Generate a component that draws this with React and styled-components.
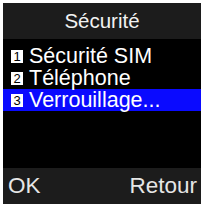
import styled, { createGlobalStyle } from "styled-components";

const GlobalStyle = createGlobalStyle`
  html, body {
    margin: 0;
    padding: 0;
    background: #ffffff;
  }
  body {
    font-family: "Liberation Sans", Arial, sans-serif;
  }
`;

const Screen = styled.div`
  width: 198px;
  height: 201px;
  margin: 3px 3px 2px 3px;
  background: #000000;
  display: flex;
  flex-direction: column;
`;

const Header = styled.div`
  height: 36px;
  background: #1c1c1c;
  color: #f2f2f2;
  font-size: 20.5px;
  display: flex;
  align-items: center;
  justify-content: center;
`;

const List = styled.ul`
  list-style: none;
  margin: 0;
  padding: 6px 0 0 0;
  flex: 1;
`;

const Item = styled.li`
  height: 22px;
  display: flex;
  align-items: center;
  gap: 6px;
  padding-left: 8px;
  font-size: 21.5px;
  line-height: 22px;
  color: #ffffff;
  background: ${({ $active }) => ($active ? "#0a0aff" : "transparent")};
`;

const Num = styled.span`
  width: 12px;
  height: 13px;
  background: #ffffff;
  color: #000000;
  font-size: 13px;
  line-height: 13px;
  text-align: center;
  flex-shrink: 0;
`;

const Footer = styled.div`
  height: 36px;
  background: #1c1c1c;
  color: #e6e6e6;
  font-size: 22.5px;
  display: flex;
  align-items: center;
  justify-content: space-between;
  padding: 0 4px 0 5px;
`;

const items = ["Sécurité SIM", "Téléphone", "Verrouillage..."];

export default function App() {
  return (
    <>
      <GlobalStyle />
      <Screen>
        <Header>Sécurité</Header>
        <List>
          {items.map((label, i) => (
            <Item key={label} $active={i === 2}>
              <Num>{i + 1}</Num>
              {label}
            </Item>
          ))}
        </List>
        <Footer>
          <span>OK</span>
          <span>Retour</span>
        </Footer>
      </Screen>
    </>
  );
}
